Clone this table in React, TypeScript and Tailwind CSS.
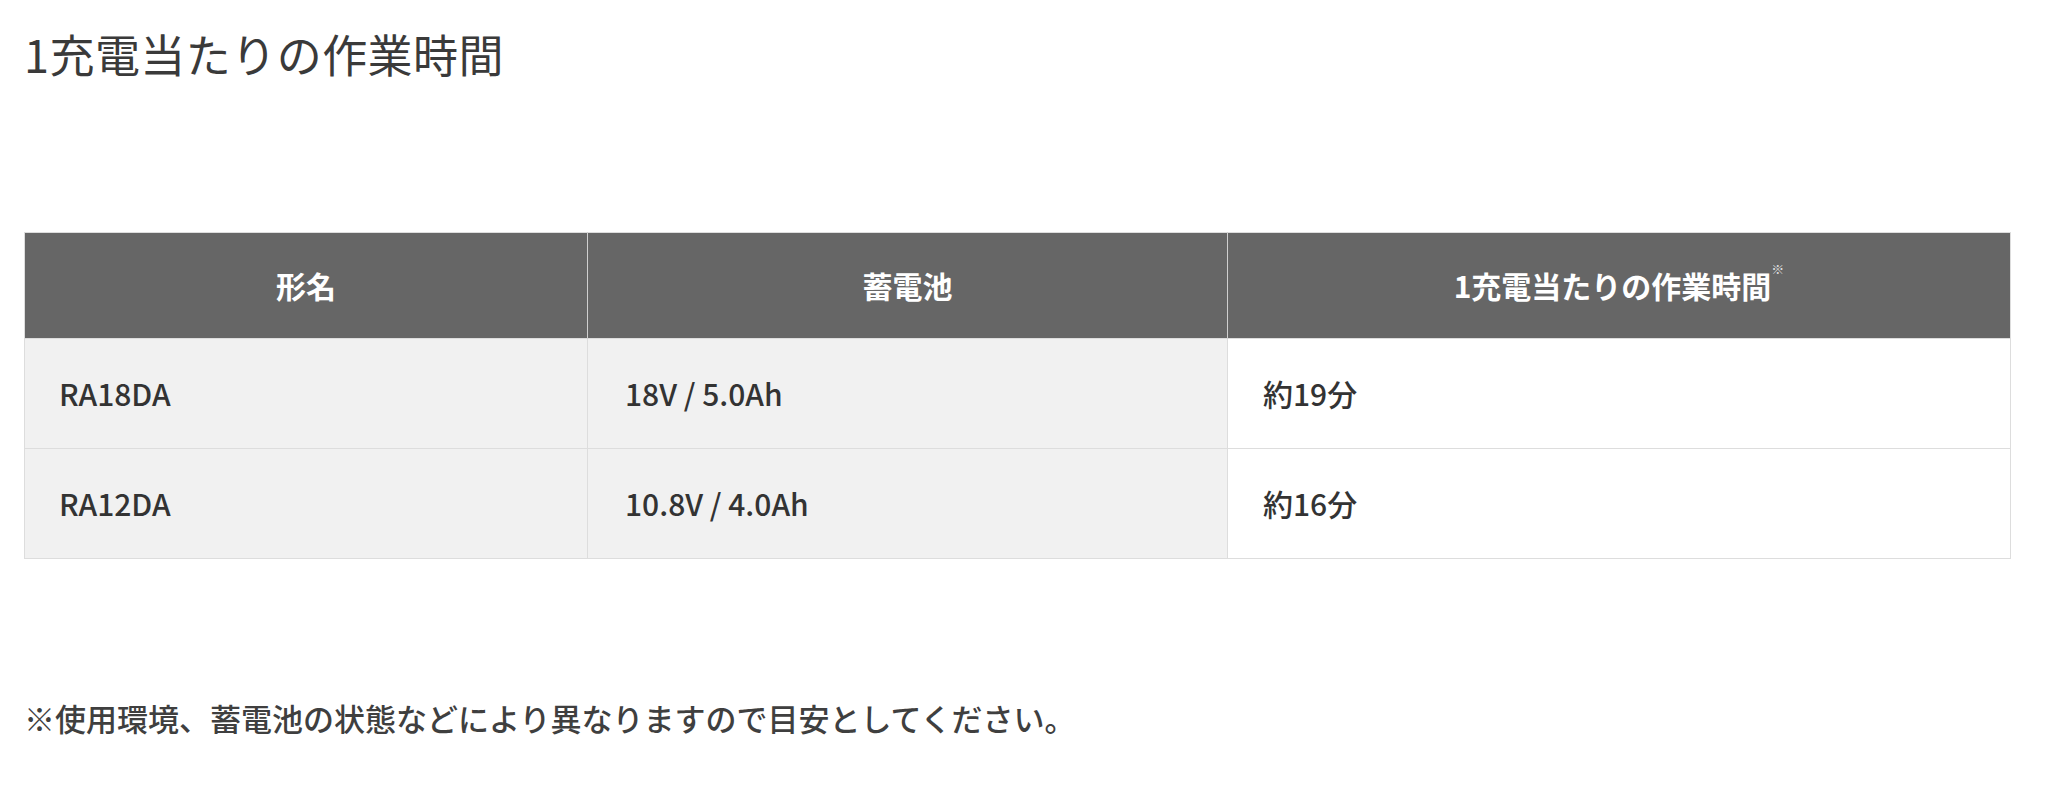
import React from "react";

const rows = [
  { model: "RA18DA", battery: "18V / 5.0Ah", time: "約19分" },
  { model: "RA12DA", battery: "10.8V / 4.0Ah", time: "約16分" },
];

export default function App() {
  return (
    <div
      className="w-[2056px] h-[800px] bg-white pl-[24px] pr-[46px] text-[#333333]"
      style={{ fontFamily: '"Noto Sans CJK JP", "Noto Sans", sans-serif' }}
    >
      <h1 className="pt-[21px] text-[45px] leading-[66px] font-normal tracking-[0.01em] text-[#3a3a3a]">
        1充電当たりの作業時間
      </h1>
      <table className="mt-[145px] w-[1986px] border-collapse border border-[#dddddd] table-fixed">
        <colgroup>
          <col className="w-[563px]" />
          <col className="w-[640px]" />
          <col className="w-[783px]" />
        </colgroup>
        <thead>
          <tr className="h-[106px] bg-[#666666] text-white text-[30px] font-bold">
            <th className="border-r border-[#cfcfcf] text-center align-middle">形名</th>
            <th className="border-r border-[#cfcfcf] text-center align-middle">蓄電池</th>
            <th className="text-center align-middle">
              1充電当たりの作業時間
              <sup className="text-[13px] align-top relative top-[6px] text-[#dddddd]">※</sup>
            </th>
          </tr>
        </thead>
        <tbody>
          {rows.map((r) => (
            <tr key={r.model} className="h-[110px] text-[30px] font-medium border-t border-[#dddddd]">
              <td className="bg-[#f1f1f1] border-r border-[#dddddd] pl-[34px] align-middle">{r.model}</td>
              <td className="bg-[#f1f1f1] border-r border-[#dddddd] pl-[37px] align-middle">{r.battery}</td>
              <td className="bg-white pl-[35px] align-middle">{r.time}</td>
            </tr>
          ))}
        </tbody>
      </table>
      <p className="mt-[136px] text-[31px] leading-[46px] font-medium text-[#3f3f3f]">
        ※使用環境、蓄電池の状態などにより異なりますので目安としてください。
      </p>
    </div>
  );
}
